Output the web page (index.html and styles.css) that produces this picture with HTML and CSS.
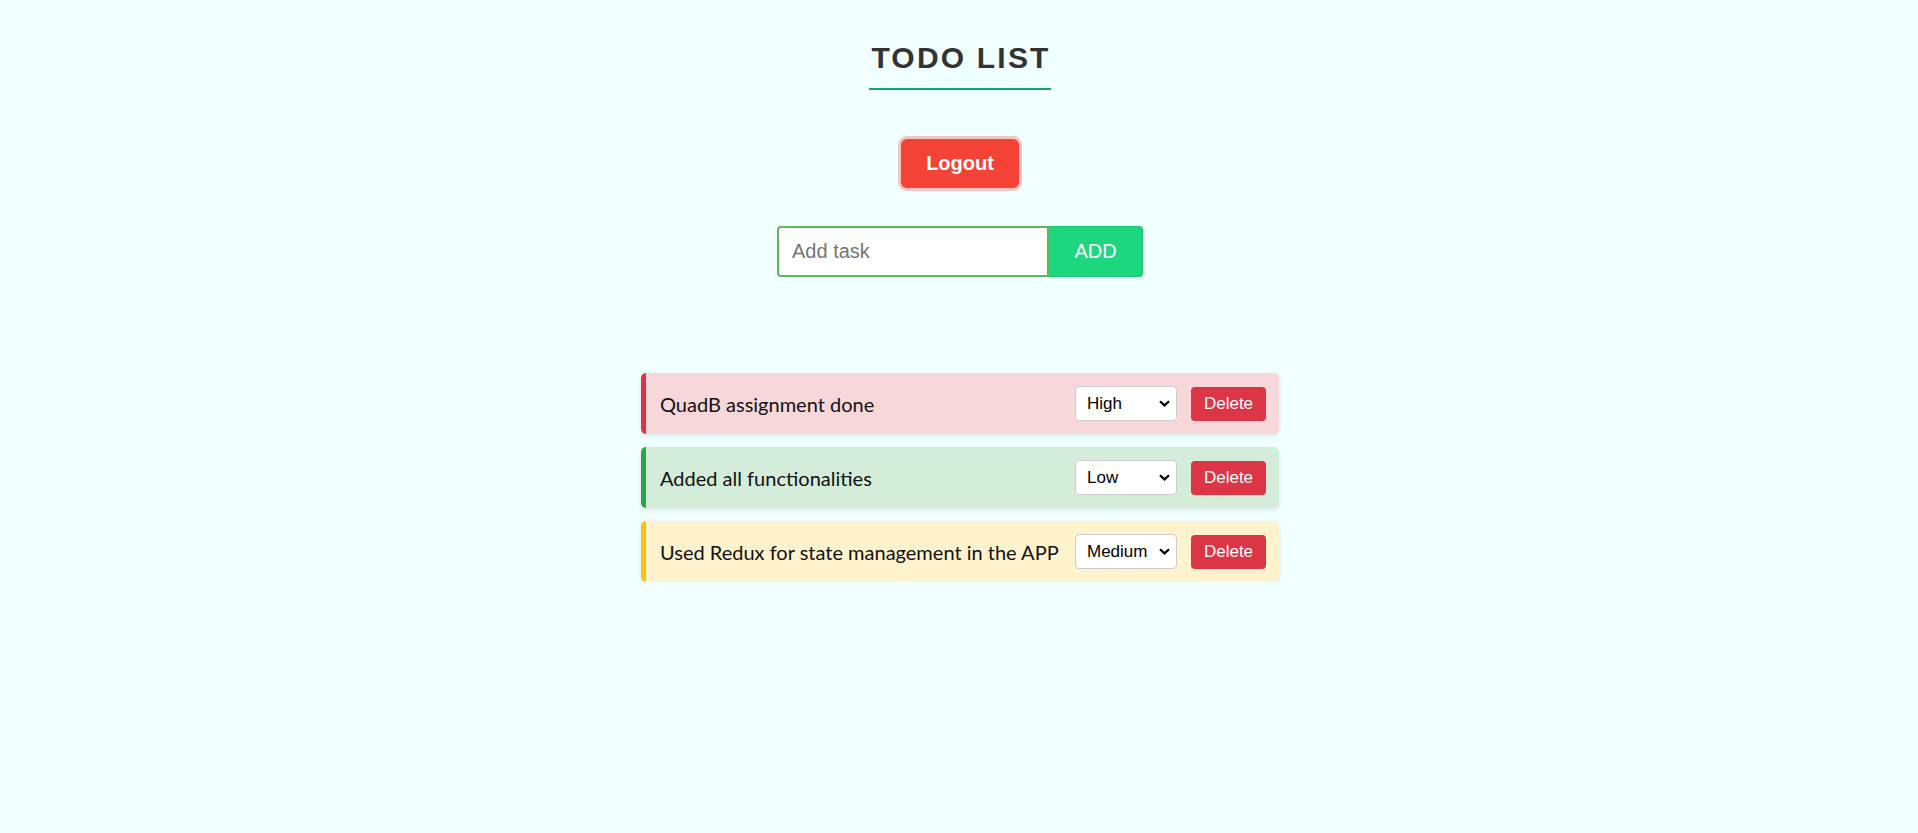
FILE: index.html
```html
<!DOCTYPE html>
<html lang="en">
<head>
<meta charset="utf-8">
<title>Todo List</title>
<link rel="stylesheet" href="styles.css">
</head>
<body>
<div class="app">
  <h1 class="title">TODO LIST</h1>
  <button class="logout">Logout</button>
  <form class="add-form">
    <input class="add-input" type="text" placeholder="Add task">
    <button class="add-btn" type="button">ADD</button>
  </form>
  <ul class="tasks">
    <li class="task task-high">
      <span class="task-text">QuadB assignment done</span>
      <div class="task-controls">
        <select class="priority">
          <option>Low</option>
          <option>Medium</option>
          <option selected>High</option>
        </select>
        <button class="delete">Delete</button>
      </div>
    </li>
    <li class="task task-low">
      <span class="task-text">Added all functionalities</span>
      <div class="task-controls">
        <select class="priority">
          <option selected>Low</option>
          <option>Medium</option>
          <option>High</option>
        </select>
        <button class="delete">Delete</button>
      </div>
    </li>
    <li class="task task-medium">
      <span class="task-text">Used Redux for state management in the APP</span>
      <div class="task-controls">
        <select class="priority">
          <option>Low</option>
          <option selected>Medium</option>
          <option>High</option>
        </select>
        <button class="delete">Delete</button>
      </div>
    </li>
  </ul>
</div>
</body>
</html>
```

FILE: styles.css
```css
html, body {
  margin: 0;
  padding: 0;
  background: #f0ffff;
}

body {
  font-family: "Liberation Sans", Arial, sans-serif;
}

.app {
  display: flex;
  flex-direction: column;
  align-items: center;
  padding-top: 41px;
  padding-left: 2px;
}

.title {
  margin: 0;
  font-size: 30px;
  line-height: 34px;
  font-weight: 700;
  letter-spacing: 2.2px;
  color: #333333;
  padding: 0 0 13px 2px;
  border-bottom: 2px solid #0fa86b;
}

.logout {
  margin-top: 49px;
  font-family: "Liberation Sans", Arial, sans-serif;
  font-size: 20px;
  line-height: 23px;
  font-weight: 700;
  color: #ffffff;
  background: #f44336;
  border: none;
  border-radius: 6px;
  padding: 13px 25px;
  box-shadow: 0 0 0 3px rgba(244, 67, 54, 0.3);
}

.add-form {
  margin-top: 38px;
  display: flex;
}

.add-input {
  box-sizing: border-box;
  width: 272px;
  height: 51px;
  padding: 12px 13px;
  font-family: "Liberation Sans", Arial, sans-serif;
  font-size: 20px;
  line-height: 23px;
  border: 2px solid #5cb85c;
  border-radius: 4px 0 0 4px;
  background: #ffffff;
  color: #333;
  outline: none;
}

.add-input::placeholder {
  color: #757575;
}

.add-btn {
  box-sizing: border-box;
  width: 94px;
  height: 51px;
  font-family: "Liberation Sans", Arial, sans-serif;
  font-size: 20px;
  color: #ffffff;
  background: #1dd67d;
  border: 1px solid #1bc674;
  border-left: none;
  border-radius: 0 4px 4px 0;
  padding: 0;
}

.tasks {
  list-style: none;
  margin: 96px 0 0;
  padding: 0;
  display: flex;
  flex-direction: column;
  gap: 13px;
}

.task {
  box-sizing: border-box;
  width: 638px;
  height: 61px;
  display: flex;
  align-items: center;
  justify-content: space-between;
  padding: 0 13px 0 14px;
  border-left: 5px solid;
  border-radius: 5px;
  box-shadow: 0 2px 4px rgba(0, 0, 0, 0.1);
}

.task-high {
  background: #f8d7da;
  border-left-color: #dc3545;
}

.task-low {
  background: #d4edda;
  border-left-color: #28a745;
}

.task-medium {
  background: #fff3cd;
  border-left-color: #ffc107;
}

.task-text {
  font-family: Lato, "Open Sans", sans-serif;
  font-size: 20px;
  color: #111111;
}

.task-controls {
  display: flex;
  align-items: center;
  gap: 14px;
}

.priority {
  box-sizing: border-box;
  width: 102px;
  height: 35px;
  padding: 0 24px 0 11px;
  font-family: "Liberation Sans", Arial, sans-serif;
  font-size: 17px;
  color: #000;
  -webkit-appearance: none;
  appearance: none;
  background-color: #ffffff;
  background-image: url("data:image/svg+xml;utf8,<svg xmlns='http://www.w3.org/2000/svg' width='11' height='7' viewBox='0 0 11 7'><path d='M1 1.2 L5.5 5.4 L10 1.2' fill='none' stroke='black' stroke-width='2.2'/></svg>");
  background-repeat: no-repeat;
  background-position: right 6px center;
  background-size: 11px 7px;
  border: 1px solid #cccccc;
  border-radius: 4px;
}

.delete {
  box-sizing: border-box;
  width: 75px;
  height: 34px;
  padding: 0;
  font-family: "Liberation Sans", Arial, sans-serif;
  font-size: 17px;
  color: #ffffff;
  background: #dc3545;
  border: none;
  border-radius: 4px;
}
```
